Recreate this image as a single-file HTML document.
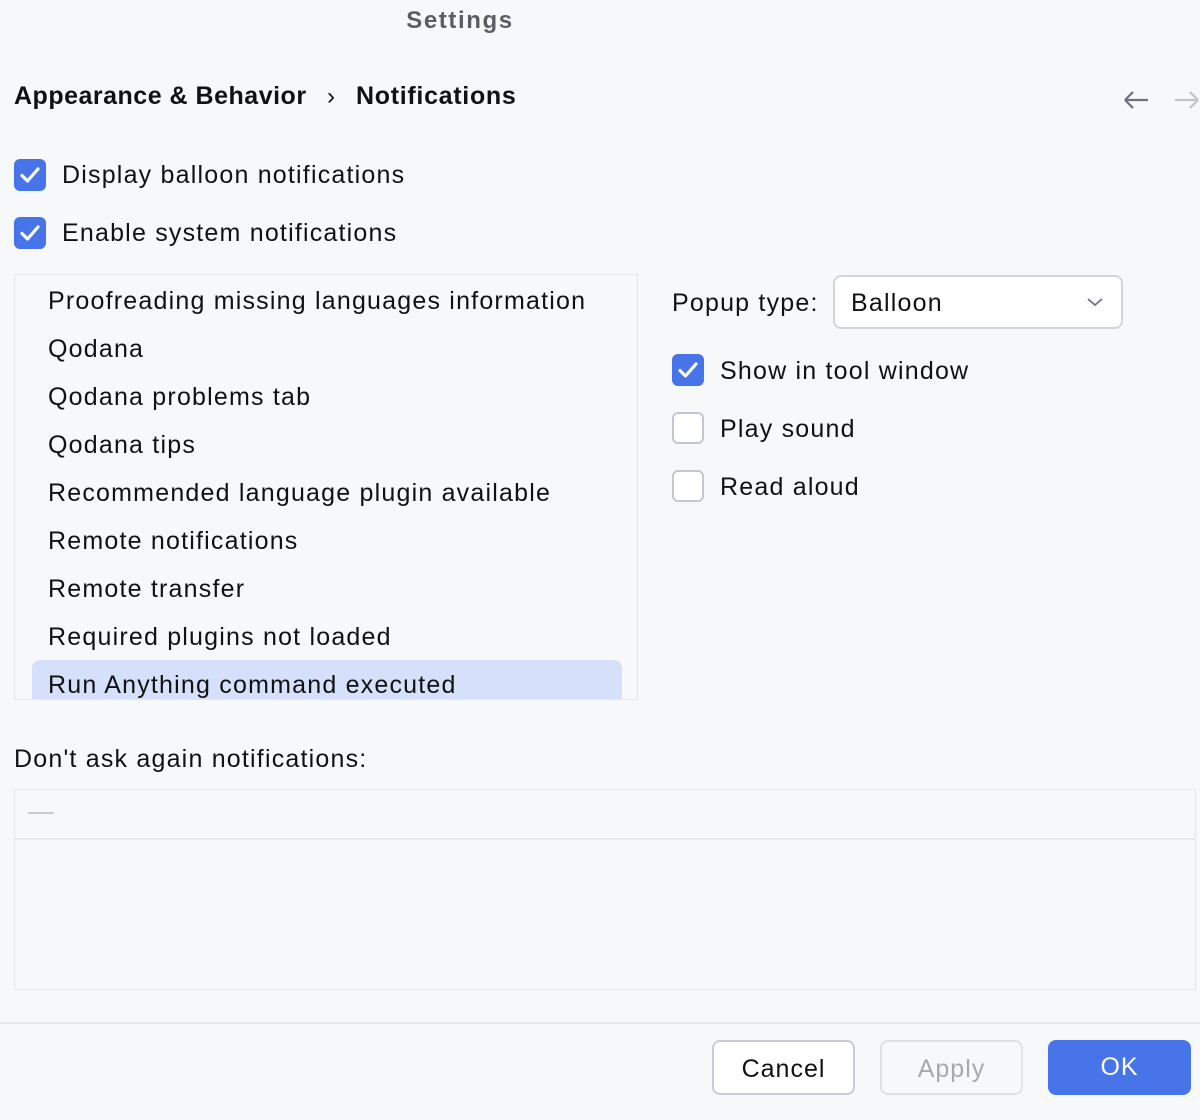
<!DOCTYPE html>
<html><head><style>
body{margin:0;width:1200px;height:1120px;background:#f7f8fa;font-family:"Liberation Sans",sans-serif;color:#111;position:relative;overflow:hidden}
.a{position:absolute;white-space:nowrap}
.t{font-size:25px;letter-spacing:1.2px}
.cb{position:absolute;width:32px;height:32px;border-radius:6px;background:#4774e8}
.cb svg{position:absolute;left:0;top:0}
.ucb{position:absolute;width:28px;height:28px;border-radius:6px;border:2px solid #c4c7d0;background:#fff}
.btn{position:absolute;top:1040px;height:55px;width:143px;border-radius:8px;box-sizing:border-box;font-size:25px;letter-spacing:1px;text-align:center;line-height:55px}
</style></head><body>
<div class="a" style="left:0;width:920px;top:7px;text-align:center;font-size:24px;font-weight:bold;color:#5a5d63;letter-spacing:1.6px">Settings</div>
<div class="a" style="left:14px;top:82px;font-size:25px;font-weight:bold;letter-spacing:0.5px">Appearance &amp; Behavior</div>
<div class="a" style="left:327px;top:83px;font-size:24px">›</div>
<div class="a" style="left:356px;top:82px;font-size:25px;font-weight:bold;letter-spacing:0.7px">Notifications</div>
<svg class="a" style="left:1122px;top:88px" width="28" height="24"><path d="M3 12H26M3 12L11 4M3 12L11 20" stroke="#6c707e" stroke-width="2.2" fill="none"/></svg>
<svg class="a" style="left:1174px;top:88px" width="26" height="24"><path d="M1 12H24M24 12L16 4M24 12L16 20" stroke="#c2c4c9" stroke-width="2.2" fill="none"/></svg>

<div class="cb" style="left:14px;top:159px"><svg width="32" height="32"><path d="M8 16.5L13.5 22L24 10" stroke="#fff" stroke-width="3.2" fill="none" stroke-linecap="round" stroke-linejoin="round"/></svg></div>
<div class="a t" style="left:62px;top:161px">Display balloon notifications</div>
<div class="cb" style="left:14px;top:217px"><svg width="32" height="32"><path d="M8 16.5L13.5 22L24 10" stroke="#fff" stroke-width="3.2" fill="none" stroke-linecap="round" stroke-linejoin="round"/></svg></div>
<div class="a t" style="left:62px;top:219px">Enable system notifications</div>

<div class="a" style="left:14px;top:274px;width:622px;height:424px;border:1px solid #e4e6ea;overflow:hidden">
<div class="a" style="left:17px;top:385px;width:590px;height:60px;background:#d5e0fb;border-radius:8px"></div>
<div class="a t" style="left:33px;top:12px">Proofreading missing languages information</div>
<div class="a t" style="left:33px;top:60px">Qodana</div>
<div class="a t" style="left:33px;top:108px">Qodana problems tab</div>
<div class="a t" style="left:33px;top:156px">Qodana tips</div>
<div class="a t" style="left:33px;top:204px">Recommended language plugin available</div>
<div class="a t" style="left:33px;top:252px">Remote notifications</div>
<div class="a t" style="left:33px;top:300px">Remote transfer</div>
<div class="a t" style="left:33px;top:348px">Required plugins not loaded</div>
<div class="a t" style="left:33px;top:396px">Run Anything command executed</div>
</div>

<div class="a t" style="left:672px;top:289px">Popup type:</div>
<div class="a" style="left:833px;top:275px;width:290px;height:54px;box-sizing:border-box;border:2px solid #d3d5dc;border-radius:8px;background:#fff"></div>
<div class="a t" style="left:851px;top:289px">Balloon</div>
<svg class="a" style="left:1086px;top:296px" width="18" height="12"><path d="M2 3L9 9L16 3" stroke="#6c707e" stroke-width="1.8" fill="none"/></svg>

<div class="cb" style="left:672px;top:354px"><svg width="32" height="32"><path d="M8 16.5L13.5 22L24 10" stroke="#fff" stroke-width="3.2" fill="none" stroke-linecap="round" stroke-linejoin="round"/></svg></div>
<div class="a t" style="left:720px;top:357px">Show in tool window</div>
<div class="ucb" style="left:672px;top:412px"></div>
<div class="a t" style="left:720px;top:415px">Play sound</div>
<div class="ucb" style="left:672px;top:470px"></div>
<div class="a t" style="left:720px;top:473px">Read aloud</div>

<div class="a t" style="left:14px;top:745px">Don't ask again notifications:</div>
<div class="a" style="left:14px;top:789px;width:1180px;height:199px;border:1px solid #e4e6ea"></div>
<div class="a" style="left:15px;top:838px;width:1180px;height:2px;background:#e8e9ec"></div>
<div class="a" style="left:28px;top:812px;width:26px;height:2px;background:#c9cbd0"></div>

<div class="a" style="left:0;top:1022px;width:1200px;height:2px;background:#e6e7ea"></div>
<div class="btn" style="left:712px;background:#fff;border:2px solid #c9ccd6">Cancel</div>
<div class="btn" style="left:880px;border:2px solid #dfe1e5;color:#a7a9b0">Apply</div>
<div class="btn" style="left:1048px;background:#4774e8;color:#fff">OK</div>
</body></html>
